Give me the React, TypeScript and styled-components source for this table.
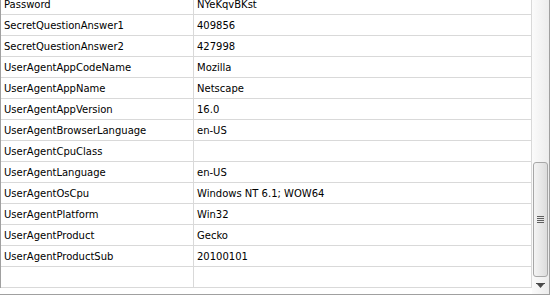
import React from "react";
import styled, { createGlobalStyle } from "styled-components";

const GlobalStyle = createGlobalStyle`
  html, body {
    margin: 0;
    padding: 0;
    background: #ffffff;
  }
  body {
    font-family: "DejaVu Sans", Verdana, sans-serif;
    font-size: 10px;
    color: #000000;
  }
`;

const Frame = styled.div`
  width: 549px;
  height: 294px;
  display: flex;
  border-right: 1px solid #a0a0a0;
  border-bottom: 1px solid #a0a0a0;
  overflow: hidden;
  background: #ffffff;
`;

const GridArea = styled.div`
  width: 532px;
  height: 294px;
  overflow: hidden;
`;

const Rows = styled.div`
  margin-top: -6px;
  border-left: 1px solid #a0a0a0;
`;

const Row = styled.div`
  display: flex;
  height: 20px;
  border-bottom: 1px solid #d9d9d9;
`;

const Cell = styled.div<{ $w: number }>`
  width: ${(p) => p.$w}px;
  flex: none;
  padding: 1px 0 0 3px;
  box-sizing: border-box;
  border-right: 1px solid #d9d9d9;
  display: flex;
  align-items: center;
  white-space: nowrap;
  overflow: hidden;
  line-height: 19px;
`;

const ScrollBar = styled.div`
  width: 17px;
  height: 294px;
  display: flex;
  flex-direction: column;
  background: linear-gradient(to right, #fbfbfb 0%, #ececec 100%);
`;

const Track = styled.div`
  flex: 1;
  display: flex;
  flex-direction: column;
  justify-content: flex-end;
  padding: 0 1px 0 1px;
`;

const Thumb = styled.div`
  height: 115px;
  box-sizing: border-box;
  border: 1px solid #a7a7a7;
  border-radius: 3px;
  background: linear-gradient(to right, #f4f4f4 0%, #e6e6e6 60%, #dcdcdc 100%);
  display: flex;
  align-items: center;
  justify-content: center;
`;

const ArrowBox = styled.div`
  height: 17px;
  display: flex;
  align-items: center;
  justify-content: center;
`;

const rows: [string, string][] = [
  ["Password", "NYeKqvBKst"],
  ["SecretQuestionAnswer1", "409856"],
  ["SecretQuestionAnswer2", "427998"],
  ["UserAgentAppCodeName", "Mozilla"],
  ["UserAgentAppName", "Netscape"],
  ["UserAgentAppVersion", "16.0"],
  ["UserAgentBrowserLanguage", "en-US"],
  ["UserAgentCpuClass", ""],
  ["UserAgentLanguage", "en-US"],
  ["UserAgentOsCpu", "Windows NT 6.1; WOW64"],
  ["UserAgentPlatform", "Win32"],
  ["UserAgentProduct", "Gecko"],
  ["UserAgentProductSub", "20100101"],
  ["", ""],
];

export default function App() {
  return (
    <>
      <GlobalStyle />
      <Frame>
        <GridArea>
          <Rows>
            {rows.map(([k, v], i) => (
              <Row key={i}>
                <Cell $w={193}>{k}</Cell>
                <Cell $w={338}>{v}</Cell>
              </Row>
            ))}
          </Rows>
        </GridArea>
        <ScrollBar>
          <Track>
            <Thumb>
              <svg width="7" height="7" viewBox="0 0 7 7">
                <rect x="0" y="0" width="7" height="1" fill="#5f5f5f" />
                <rect x="0" y="2" width="7" height="1" fill="#5f5f5f" />
                <rect x="0" y="4" width="7" height="1" fill="#5f5f5f" />
                <rect x="0" y="6" width="7" height="1" fill="#5f5f5f" />
              </svg>
            </Thumb>
          </Track>
          <ArrowBox>
            <svg width="9" height="5" viewBox="0 0 9 5">
              <rect x="0" y="0" width="9" height="1" fill="#4a4a4a" />
              <polygon points="1,1 8,1 4.5,5" fill="#4a4a4a" />
            </svg>
          </ArrowBox>
        </ScrollBar>
      </Frame>
    </>
  );
}
